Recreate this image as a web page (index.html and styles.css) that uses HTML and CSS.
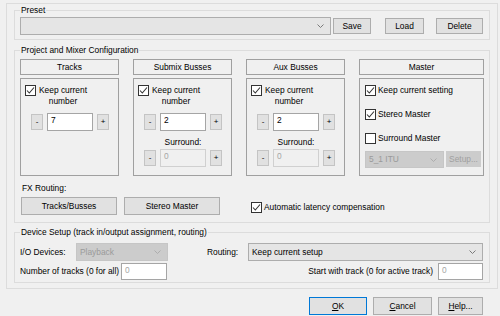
FILE: index.html
```html
<!DOCTYPE html>
<html>
<head>
<meta charset="utf-8">
<link rel="stylesheet" href="styles.css">
</head>
<body>
<div class="dialog">
  <div class="group preset">
    <span class="legend">Preset</span>
    <div class="combo preset-combo"><span class="ctext"></span><svg class="chev" width="7" height="4" viewBox="0 0 7 4"><polyline points="0.5,0.5 3.5,3.5 6.5,0.5" fill="none" stroke="#7a7a7a" stroke-width="1"/></svg></div>
    <div class="btn save">Save</div>
    <div class="btn load">Load</div>
    <div class="btn del">Delete</div>
  </div>

  <div class="group project">
    <span class="legend">Project and Mixer Configuration</span>
    <div class="cols">
      <div class="col">
        <div class="head">Tracks</div>
        <div class="panel">
          <div class="check multi"><span class="cb"><svg width="9" height="9" viewBox="0 0 9 9"><polyline points="1,4.5 3.3,7 8,1.5" fill="none" stroke="#333" stroke-width="1.1"/></svg></span><span class="ml">Keep current number</span></div>
          <div class="spin"><span class="sbtn">-</span><span class="edit">7</span><span class="sbtn">+</span></div>
        </div>
      </div>
      <div class="col">
        <div class="head">Submix Busses</div>
        <div class="panel">
          <div class="check multi"><span class="cb"><svg width="9" height="9" viewBox="0 0 9 9"><polyline points="1,4.5 3.3,7 8,1.5" fill="none" stroke="#333" stroke-width="1.1"/></svg></span><span class="ml">Keep current number</span></div>
          <div class="spin"><span class="sbtn">-</span><span class="edit">2</span><span class="sbtn">+</span></div>
          <div class="slabel">Surround:</div>
          <div class="spin second"><span class="sbtn">-</span><span class="edit dis">0</span><span class="sbtn">+</span></div>
        </div>
      </div>
      <div class="col">
        <div class="head">Aux Busses</div>
        <div class="panel">
          <div class="check multi"><span class="cb"><svg width="9" height="9" viewBox="0 0 9 9"><polyline points="1,4.5 3.3,7 8,1.5" fill="none" stroke="#333" stroke-width="1.1"/></svg></span><span class="ml">Keep current number</span></div>
          <div class="spin"><span class="sbtn">-</span><span class="edit">2</span><span class="sbtn">+</span></div>
          <div class="slabel">Surround:</div>
          <div class="spin second"><span class="sbtn">-</span><span class="edit dis">0</span><span class="sbtn">+</span></div>
        </div>
      </div>
      <div class="col master">
        <div class="head">Master</div>
        <div class="panel mpanel">
          <div class="check mrow"><span class="cb"><svg width="9" height="9" viewBox="0 0 9 9"><polyline points="1,4.5 3.3,7 8,1.5" fill="none" stroke="#333" stroke-width="1.1"/></svg></span><span>Keep current setting</span></div>
          <div class="check mrow"><span class="cb"><svg width="9" height="9" viewBox="0 0 9 9"><polyline points="1,4.5 3.3,7 8,1.5" fill="none" stroke="#333" stroke-width="1.1"/></svg></span><span>Stereo Master</span></div>
          <div class="check mrow"><span class="cb"></span><span>Surround Master</span></div>
          <div class="mcombo-row">
            <div class="combo dcombo itu"><span class="ctext">5_1 ITU</span><svg class="chev" width="7" height="4" viewBox="0 0 7 4"><polyline points="0.5,0.5 3.5,3.5 6.5,0.5" fill="none" stroke="#adadad" stroke-width="1"/></svg></div>
            <div class="btn dbtn setup">Setup...</div>
          </div>
        </div>
      </div>
    </div>
    <div class="fxlabel">FX Routing:</div>
    <div class="fxrow">
      <div class="btn fxbtn">Tracks/Busses</div>
      <div class="btn fxbtn">Stereo Master</div>
      <div class="check latency"><span class="cb"><svg width="9" height="9" viewBox="0 0 9 9"><polyline points="1,4.5 3.3,7 8,1.5" fill="none" stroke="#333" stroke-width="1.1"/></svg></span><span>Automatic latency compensation</span></div>
    </div>
  </div>

  <div class="group device">
    <span class="legend">Device Setup (track in/output assignment, routing)</span>
    <div class="drow">
      <span class="iolabel">I/O Devices:</span>
      <div class="combo dcombo playback"><span class="ctext">Playback</span><svg class="chev" width="7" height="4" viewBox="0 0 7 4"><polyline points="0.5,0.5 3.5,3.5 6.5,0.5" fill="none" stroke="#adadad" stroke-width="1"/></svg></div>
      <span class="routlabel">Routing:</span>
      <div class="combo routing"><span class="ctext">Keep current setup</span><svg class="chev" width="7" height="4" viewBox="0 0 7 4"><polyline points="0.5,0.5 3.5,3.5 6.5,0.5" fill="none" stroke="#7a7a7a" stroke-width="1"/></svg></div>
    </div>
    <div class="drow second">
      <span class="numlabel">Number of tracks (0 for all)</span>
      <span class="edit gray wide">0</span>
      <span class="startlabel">Start with track (0 for active track)</span>
      <span class="edit gray wide2">0</span>
    </div>
  </div>
</div>
<div class="footer">
  <div class="btn fbtn ok"><u>O</u>K</div>
  <div class="btn fbtn cancel"><u>C</u>ancel</div>
  <div class="btn fbtn help"><u>H</u>elp...</div>
</div>
</body>
</html>
```
FILE: styles.css
```css
html, body {
  margin: 0;
  padding: 0;
}
body {
  background: #f0f0f0;
  font-family: "Liberation Sans", Arial, sans-serif;
  font-size: 8.4px;
  line-height: 10.5px;
  color: #000;
  width: 500px;
  height: 316px;
  overflow: hidden;
}
.dialog {
  margin: 3px 0 0 6px;
  width: 492px;
  height: 286px;
  box-sizing: border-box;
  border: 1px solid #dcdcdc;
  padding: 6px 7px 0 7px;
}
.group {
  position: relative;
  border: 1px solid #dcdcdc;
  box-sizing: border-box;
}
.legend {
  position: absolute;
  left: 5px;
  top: -6px;
  padding: 0 1px;
  background: #f0f0f0;
  white-space: nowrap;
}
.preset {
  height: 30px;
  padding: 6px 6px 0 5px;
  display: flex;
  align-items: flex-start;
}
.combo {
  box-sizing: border-box;
  height: 18px;
  background: #e5e5e5;
  border: 1px solid #adadad;
  display: flex;
  align-items: center;
  padding: 0 6px 0 3px;
}
.combo .ctext {
  flex: 1;
  white-space: nowrap;
}
.chev {
  display: block;
}
.preset-combo {
  width: 311px;
}
.btn {
  box-sizing: border-box;
  background: #e1e1e1;
  border: 1px solid #adadad;
  display: flex;
  align-items: center;
  justify-content: center;
  white-space: nowrap;
}
.preset .btn {
  height: 16px;
  margin-top: 1px;
}
.save { width: 38px; margin-left: 2px; }
.load { width: 39px; margin-left: 14px; }
.del { width: 47px; margin-left: 12px; }

.project {
  margin-top: 10px;
  height: 173px;
  padding: 8px 0 0 5px;
}
.cols {
  display: flex;
  gap: 14px;
}
.col {
  width: 99px;
}
.col.master {
  width: 125px;
}
.head {
  box-sizing: border-box;
  height: 16px;
  border: 1px solid #a0a0a0;
  display: flex;
  align-items: center;
  justify-content: center;
  margin-bottom: 3px;
}
.panel {
  box-sizing: border-box;
  height: 98px;
  border: 1px solid #a0a0a0;
  padding: 6px 0 0 4px;
}
.check {
  display: flex;
  align-items: center;
  white-space: nowrap;
}
.check.multi {
  align-items: flex-start;
}
.cb {
  box-sizing: border-box;
  width: 11px;
  height: 11px;
  border: 1px solid #333;
  background: #fff;
  margin-right: 2px;
  flex: none;
  display: flex;
  align-items: center;
  justify-content: center;
}
.cb svg {
  display: block;
}
.multi .cb {
  margin-top: 0;
}
.ml {
  width: 50px;
  white-space: normal;
  text-align: center;
}
.spin {
  display: flex;
  align-items: center;
  margin: 7px 0 0 6px;
}
.spin.second {
  margin-top: 1px;
}
.sbtn {
  box-sizing: border-box;
  width: 12px;
  height: 16px;
  background: #e1e1e1;
  border: 1px solid #c4c4c4;
  display: flex;
  align-items: center;
  justify-content: center;
  font-size: 8px;
}
.edit {
  box-sizing: border-box;
  width: 46px;
  height: 18px;
  background: #fff;
  border: 1px solid #a5a5a5;
  margin: 0 4px;
  padding: 1px 0 0 3px;
  line-height: 10.5px;
}
.edit.dis {
  background: #f0f0f0;
  border-color: #d0d0d0;
  color: #a6a6a6;
}
.slabel {
  margin: 6px 0 0 22px;
  width: 46px;
  text-align: center;
  line-height: 11px;
}
.mpanel .mrow {
  margin-left: 1px;
  height: 11px;
  line-height: 11px;
}
.mpanel .mrow + .mrow {
  margin-top: 13px;
}
.mcombo-row {
  display: flex;
  align-items: flex-start;
  margin: 7px 0 0 1px;
}
.dcombo {
  background: #cccccc;
  border-color: #c6c6c6;
  color: #9a9a9a;
}
.itu {
  width: 79px;
  height: 17px;
}
.dbtn {
  background: #cccccc;
  border-color: #cccccc;
  color: #a0a0a0;
}
.setup {
  width: 35px;
  height: 16px;
  margin-left: 2px;
}
.fxlabel {
  margin: 7px 0 0 2px;
  line-height: 11px;
}
.fxrow {
  display: flex;
  align-items: center;
  margin: 3px 0 0 1px;
}
.fxbtn {
  width: 96px;
  height: 18px;
}
.fxbtn + .fxbtn {
  margin-left: 7px;
}
.latency {
  margin: 2px 0 0 31px;
}

.device {
  margin-top: 9px;
  height: 51px;
  padding: 10px 6px 0 5px;
}
.drow {
  display: flex;
  align-items: center;
  height: 18px;
}
.drow.second {
  margin-top: 2px;
  height: 17px;
}
.iolabel {
  width: 56px;
}
.playback {
  width: 92px;
}
.routlabel {
  margin-left: 39px;
  width: 41px;
}
.routing {
  width: 235px;
}
.numlabel {
  width: 101px;
  white-space: nowrap;
}
.edit.gray {
  color: #a6a6a6;
  height: 17px;
  margin: 0;
}
.wide {
  width: 46px;
}
.startlabel {
  margin-left: auto;
  margin-right: 5px;
  white-space: nowrap;
}
.wide2 {
  width: 45px;
}
.footer {
  display: flex;
  justify-content: flex-end;
  gap: 6px;
  padding-right: 17px;
  margin-top: 8px;
}
.fbtn {
  height: 18px;
}
.ok {
  width: 58px;
  border-color: #0078d7;
}
.cancel {
  width: 59px;
}
.help {
  width: 45px;
}
```
